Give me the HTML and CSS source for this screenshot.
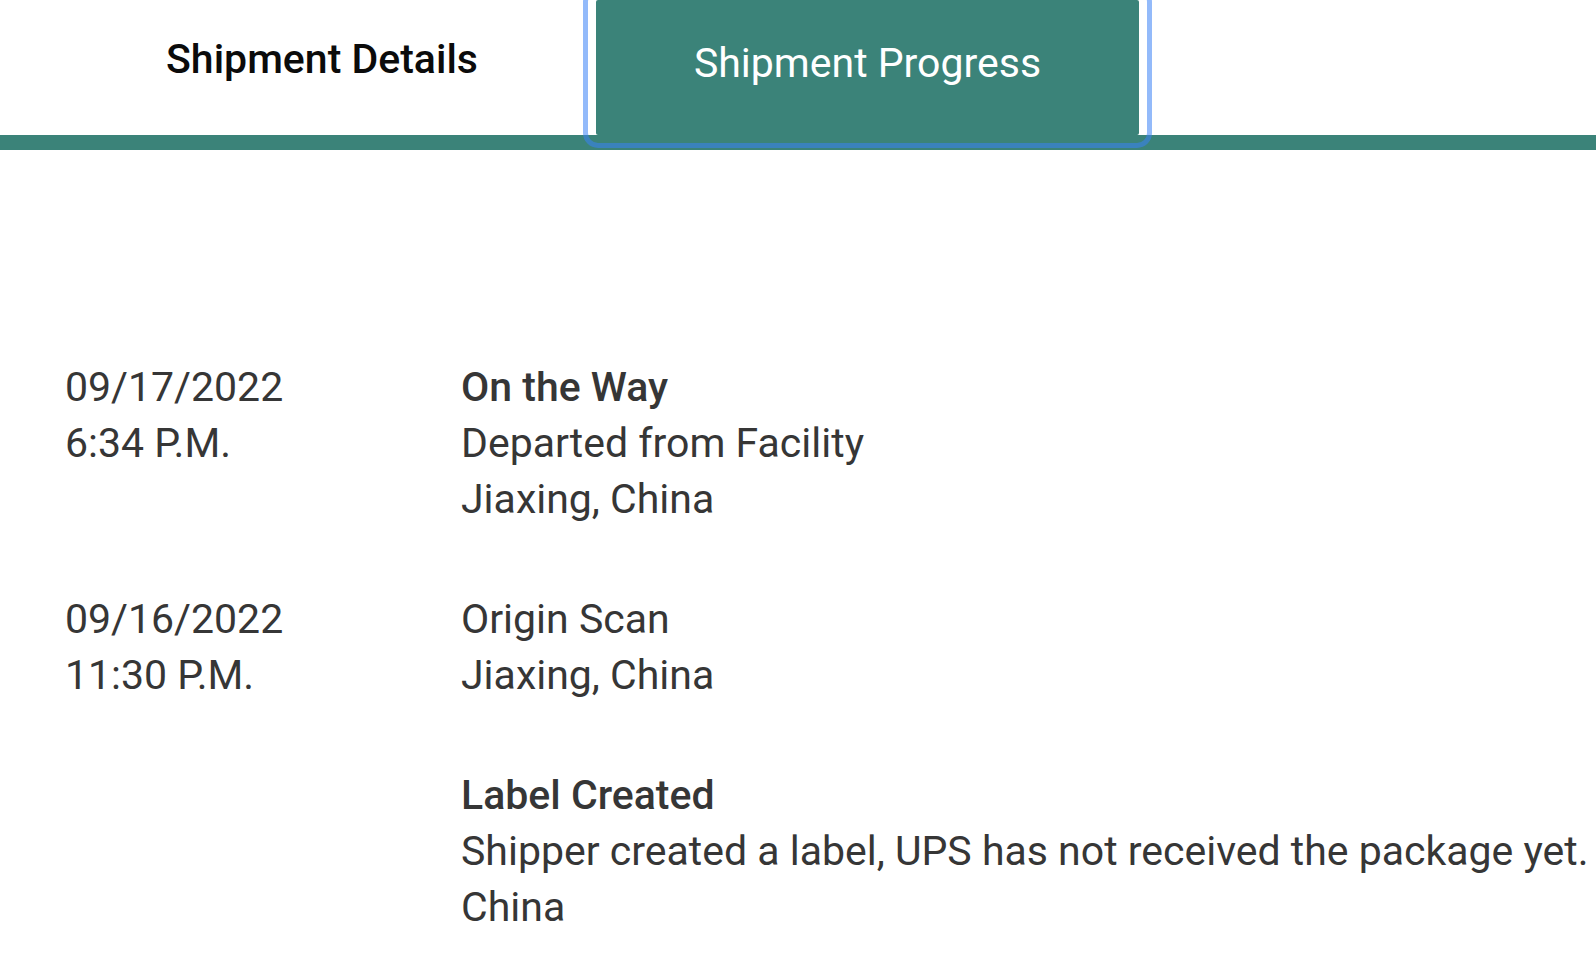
FILE: index.html
```html
<!DOCTYPE html>
<html lang="en">
<head>
<meta charset="utf-8">
<title>Shipment Progress</title>
<link rel="stylesheet" href="styles.css">
</head>
<body>
  <div class="tabs">
    <div class="tab">Shipment Details</div>
    <div class="tab tab-active">Shipment Progress</div>
  </div>
  <div class="bar"></div>
  <div class="events">
    <div class="event">
      <div class="when">
        <div class="line">09/17/2022</div>
        <div class="line">6:34 P.M.</div>
      </div>
      <div class="what">
        <div class="line strong">On the Way</div>
        <div class="line">Departed from Facility</div>
        <div class="line">Jiaxing, China</div>
      </div>
    </div>
    <div class="event">
      <div class="when">
        <div class="line">09/16/2022</div>
        <div class="line">11:30 P.M.</div>
      </div>
      <div class="what">
        <div class="line">Origin Scan</div>
        <div class="line">Jiaxing, China</div>
      </div>
    </div>
    <div class="event">
      <div class="when"></div>
      <div class="what">
        <div class="line strong">Label Created</div>
        <div class="line">Shipper created a label, UPS has not received the package yet.</div>
        <div class="line">China</div>
      </div>
    </div>
  </div>
</body>
</html>
```

FILE: styles.css
```css
html, body {
  margin: 0;
  padding: 0;
  background: #ffffff;
}

body {
  font-family: Roboto, "Liberation Sans", sans-serif;
  width: 1596px;
  height: 968px;
  overflow: hidden;
}

.tabs {
  display: flex;
  height: 135px;
  padding-left: 48px;
}

.tab {
  width: 548px;
  display: flex;
  align-items: center;
  justify-content: center;
  padding-bottom: 18px;
  box-sizing: border-box;
  font-size: 41px;
  font-weight: 500;
  color: #0b0b0b;
}

.tab-active {
  position: relative;
  width: 543px;
  background: #3b8379;
  color: #ffffff;
  font-weight: 400;
  font-size: 41px;
  padding-bottom: 9px;
  outline: 5px solid rgba(59, 130, 246, 0.55);
  outline-offset: 8px;
  border-radius: 2px;
  z-index: 1;
}

.bar {
  height: 15px;
  background: #3b8379;
}

.events {
  display: flex;
  flex-direction: column;
  gap: 64px;
  padding-top: 209px;
  padding-left: 65px;
  color: #363636;
  font-size: 41px;
}

.event {
  display: flex;
}

.when {
  width: 396px;
  flex: none;
}

.line {
  line-height: 56px;
  white-space: nowrap;
}

.strong {
  font-weight: 500;
}
```
